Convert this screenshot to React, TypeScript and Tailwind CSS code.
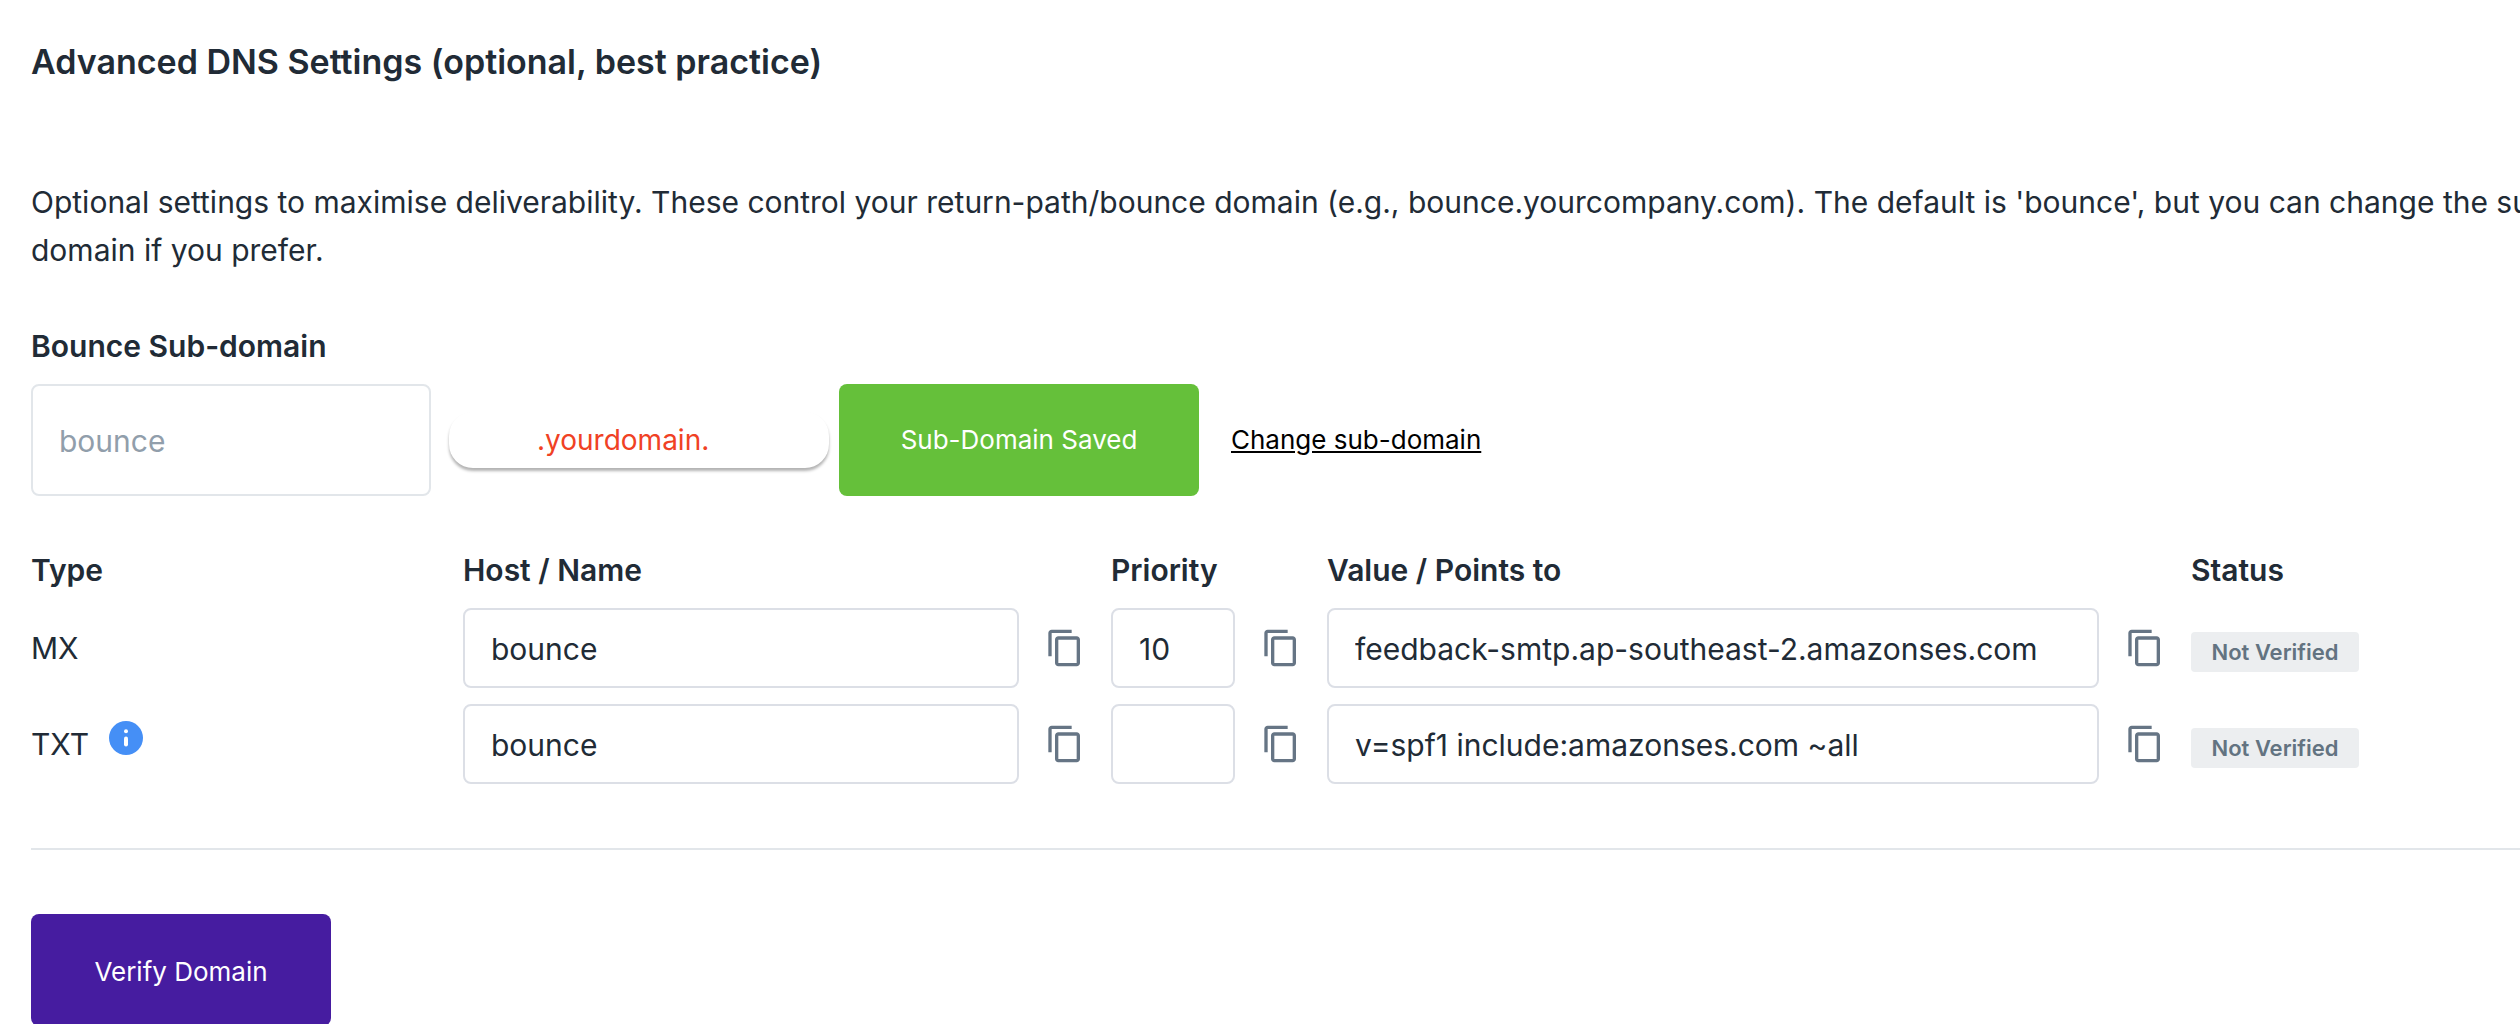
import { useState } from "react";
import { MdContentCopy } from "react-icons/md";

interface DnsRecord {
  type: string;
  host: string;
  priority: string;
  value: string;
  status: string;
  hasInfo?: boolean;
}

const records: DnsRecord[] = [
  {
    type: "MX",
    host: "bounce",
    priority: "10",
    value: "feedback-smtp.ap-southeast-2.amazonses.com",
    status: "Not Verified",
  },
  {
    type: "TXT",
    host: "bounce",
    priority: "",
    value: "v=spf1 include:amazonses.com ~all",
    status: "Not Verified",
    hasInfo: true,
  },
];

function InfoIcon() {
  return (
    <svg viewBox="0 0 34 34" className="h-[34px] w-[34px]" aria-hidden="true">
      <circle cx="17" cy="17" r="17" fill="#458ff6" />
      <circle cx="17" cy="10.2" r="2" fill="#fff" />
      <rect x="15" y="15.4" width="4" height="10" rx="2" fill="#fff" />
    </svg>
  );
}

interface CopyFieldProps {
  label: string;
  value: string;
}

function CopyField({ label, value }: CopyFieldProps) {
  const handleCopy = () => {
    navigator.clipboard?.writeText(value);
  };

  return (
    <div className="flex items-center">
      <input
        type="text"
        readOnly
        aria-label={label}
        value={value}
        className="h-20 min-w-0 flex-1 rounded-lg border-2 border-[#dcdfe6] bg-white px-[26px] pt-0.5 text-[30px] text-[#212b36] outline-none"
      />
      <button
        type="button"
        onClick={handleCopy}
        aria-label={`Copy ${label}`}
        className="mx-[26px] shrink-0 cursor-pointer text-[#667585]"
      >
        <MdContentCopy className="h-10 w-10" />
      </button>
    </div>
  );
}

export default function App() {
  const [subDomain, setSubDomain] = useState("");

  return (
    <div className="h-screen overflow-hidden bg-white pl-[31px] pt-[38px] font-['Inter',sans-serif] text-[30px] leading-[48px] text-[#212b36]">
      {/* The panel is wider than the window and runs off its right edge */}
      <div className="w-[calc(100%+103px)]">
        <h2 className="text-[34px] font-semibold leading-[48px]">
          Advanced DNS Settings (optional, best practice)
        </h2>

        <p className="mt-[92px]">
          Optional settings to maximise deliverability. These control your return-path/bounce domain
          (e.g., bounce.yourcompany.com). The default is 'bounce', but you can change the sub-domain
          if you prefer.
        </p>

        <label htmlFor="sub-domain" className="mt-12 block font-semibold">
          Bounce Sub-domain
        </label>
        <div className="mt-[14px] flex items-center">
          <input
            id="sub-domain"
            type="text"
            value={subDomain}
            onChange={(e) => setSubDomain(e.target.value)}
            placeholder="bounce"
            className="h-28 w-[400px] rounded-lg border-2 border-[#e2e6ea] bg-white px-[26px] pt-0.5 placeholder:text-[#919eab] focus:outline-none"
          />
          <span className="ml-[18px] w-[380px] rounded-3xl bg-white py-1 pl-[88px] text-[28px] text-[#f04124] shadow-[0_3px_3px_rgba(0,0,0,0.3)]">
            .yourdomain.
          </span>
          <button
            type="button"
            className="ml-[10px] h-28 w-[360px] cursor-pointer rounded-lg bg-[#65c03a] text-[26px] text-white"
          >
            Sub-Domain Saved
          </button>
          <a href="#change" className="ml-8 text-[26px] text-black underline">
            Change sub-domain
          </a>
        </div>

        <table className="mt-[50px] w-full table-fixed text-left">
          <colgroup>
            <col className="w-2/12" />
            <col className="w-3/12" />
            <col className="w-1/12" />
            <col className="w-4/12" />
            <col className="w-2/12" />
          </colgroup>
          <thead>
            <tr>
              <th className="p-0 pb-[14px] font-semibold">Type</th>
              <th className="p-0 pb-[14px] font-semibold">Host / Name</th>
              <th className="p-0 pb-[14px] font-semibold">Priority</th>
              <th className="p-0 pb-[14px] font-semibold">Value / Points to</th>
              <th className="p-0 pb-[14px] font-semibold">Status</th>
            </tr>
          </thead>
          <tbody>
            {records.map((r) => (
              <tr key={r.type}>
                <td className="p-0 pb-4">
                  <div className="flex items-center gap-5">
                    {r.type}
                    {r.hasInfo && (
                      <button type="button" aria-label="About this record" className="mb-3 cursor-pointer">
                        <InfoIcon />
                      </button>
                    )}
                  </div>
                </td>
                <td className="p-0 pb-4">
                  <CopyField label={`${r.type} host`} value={r.host} />
                </td>
                <td className="p-0 pb-4">
                  <CopyField label={`${r.type} priority`} value={r.priority} />
                </td>
                <td className="p-0 pb-4">
                  <CopyField label={`${r.type} value`} value={r.value} />
                </td>
                <td className="p-0 pb-4">
                  <span className="mt-2 flex h-10 w-[168px] items-center justify-center rounded-[4px] bg-[#eceef0] text-[22px] font-semibold text-[#637381]">
                    {r.status}
                  </span>
                </td>
              </tr>
            ))}
          </tbody>
        </table>

        <hr className="mt-12 border-t-2 border-[#e2e6ea]" />

        <button
          type="button"
          className="mt-16 h-28 w-[300px] cursor-pointer rounded-lg bg-[#461ca0] pt-1 text-[26px] text-white"
        >
          Verify Domain
        </button>
      </div>
    </div>
  );
}
